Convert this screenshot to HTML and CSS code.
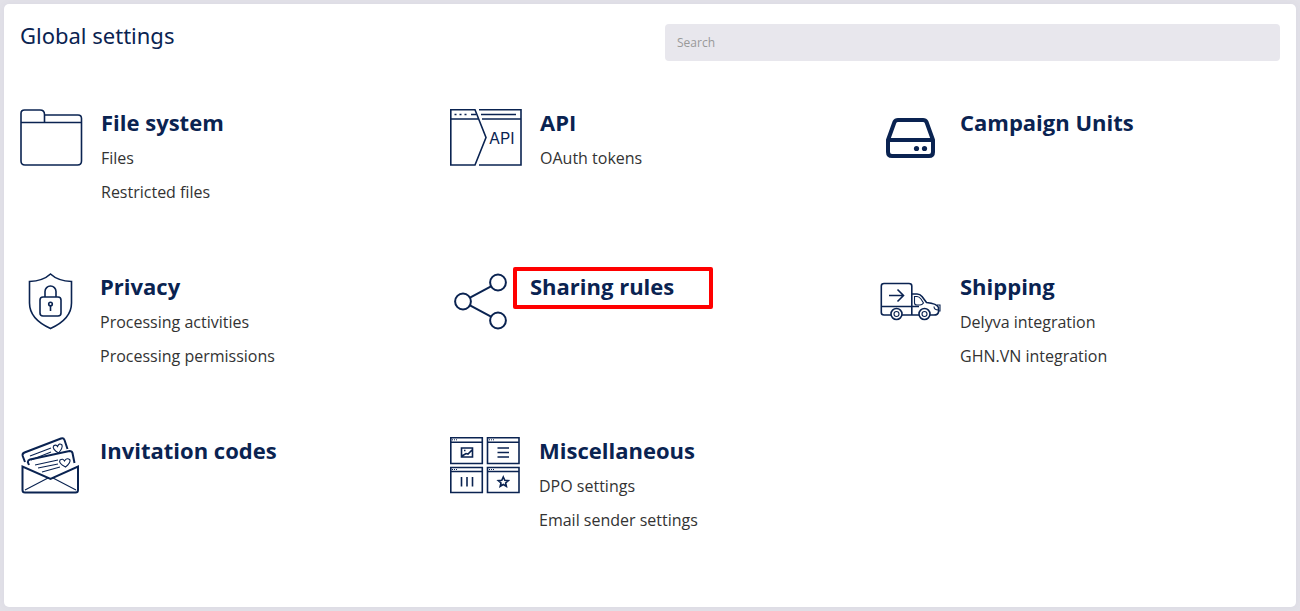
FILE: index.html
```html
<!DOCTYPE html>
<html lang="en">
<head>
<meta charset="utf-8">
<meta name="viewport" content="width=device-width, initial-scale=1">
<title>Global settings</title>
<link rel="stylesheet" href="styles.css">
</head>
<body>
<main class="card">
  <header class="card-header">
    <h1 class="title">Global settings</h1>
    <input class="search" type="search" placeholder="Search" aria-label="Search">
  </header>
  <div class="grid">
    <section class="item">
      <svg class="icon" width="61" height="60" viewBox="0 0 61 60" aria-hidden="true">
        <path d="M1 15V5.500Q1 2 4.500 2H20Q24.500 2 24.500 6.500V15M25 7H58Q61.500 7 61.500 10.500V53Q61.500 57 57.500 57H5Q1 57 1 53V14.500H61.500"/>
      </svg>
      <div class="body">
        <h2 class="heading">File system</h2>
        <ul class="links"><li><a href="#">Files</a></li><li><a href="#">Restricted files</a></li></ul>
      </div>
    </section>
    <section class="item">
      <svg class="icon" width="70" height="60" viewBox="0 0 70 60" aria-hidden="true">
        <path d="M.8 1.800H25L36 29.500L25 57H.8ZM29 1.800H71V57H29M.8 11H28M32 11H71M21 6.500H26M31 6.500H66"/>
        <path d="M4.500 6.500H6.500M9.500 6.500H11.500M14.500 6.500H16.500"/>
        <text class="icon-text" x="39" y="36">API</text>
      </svg>
      <div class="body">
        <h2 class="heading">API</h2>
        <ul class="links"><li><a href="#">OAuth tokens</a></li></ul>
      </div>
    </section>
    <section class="item">
      <svg class="icon" width="60" height="60" viewBox="0 0 60 60" aria-hidden="true">
        <path class="thick" d="M8 32L14.500 14Q15.500 12 18 12H43Q45.500 12 46.500 14L53 32V44Q53 48 49 48H12Q8 48 8 44ZM8 32H53"/>
        <circle class="solid" cx="36.500" cy="40.500" r="2.600"/><circle class="solid" cx="44.500" cy="40.500" r="2.600"/>
      </svg>
      <div class="body"><h2 class="heading">Campaign Units</h2></div>
    </section>
    <section class="item">
      <svg class="icon" width="60" height="60" viewBox="0 0 60 60" aria-hidden="true">
        <path d="M30.500 2Q38 9 51.500 9.500V31Q51.500 47 30.500 56.500Q9.500 47 9.500 31V9.500Q23 9 30.500 2Z"/>
        <rect x="20" y="25" width="21" height="19" rx="3"/>
        <path d="M25 25V19.500a5.500 5.500 0 0 1 11 0V25"/>
        <circle cx="30.500" cy="32" r="1.800"/><path d="M30.500 33.500V39"/>
      </svg>
      <div class="body">
        <h2 class="heading">Privacy</h2>
        <ul class="links"><li><a href="#">Processing activities</a></li><li><a href="#">Processing permissions</a></li></ul>
      </div>
    </section>
    <section class="item">
      <svg class="icon share" width="60" height="60" viewBox="0 0 60 60" aria-hidden="true">
        <circle cx="13" cy="29.500" r="7.900"/><circle cx="48" cy="10.500" r="7.900"/><circle cx="48" cy="48.500" r="7.900"/>
        <path d="M20 25.700L41 14.300M20 33.300L41 44.700"/>
      </svg>
      <div class="body"><h2 class="heading marked">Sharing rules</h2></div>
    </section>
    <section class="item">
      <svg class="icon" width="60" height="60" viewBox="0 0 60 60" aria-hidden="true">
        <path d="M11 43H4Q1.300 43 1.300 40.500V14Q1.300 11.500 4 11.500H29Q31.800 11.500 31.800 14V43H22M1.300 34.500H31.800M31.800 22H37Q40 22 42 24.500L46.500 30.500Q57 31.500 58.500 35.500V40Q58 43 54 43H50M39 43H31.800M31.800 34.500H39"/>
        <path class="fine" d="M34.500 24.500H37Q39 24.500 41 27L43.500 31Q42 33 40 33H37Q34.500 33 34.500 31ZM54 34.500Q54 38 58.500 38M57 33H60V39H58"/>
        <circle class="wheel" cx="16.500" cy="42" r="5.500"/><circle class="fine" cx="16.500" cy="42" r="2.500"/>
        <circle class="wheel" cx="44.500" cy="42" r="5.500"/><circle class="fine" cx="44.500" cy="42" r="2.500"/>
        <path d="M9 23.500H23M17.500 17.500L23.500 23.500L17.500 29.500"/>
      </svg>
      <div class="body">
        <h2 class="heading">Shipping</h2>
        <ul class="links"><li><a href="#">Delyva integration</a></li><li><a href="#">GHN.VN integration</a></li></ul>
      </div>
    </section>
    <section class="item">
      <svg class="icon" width="60" height="60" viewBox="0 0 60 60" aria-hidden="true">
        <path class="medium" d="M5 26L2.700 20Q2 17.500 4.500 16.500L41 2.500Q43.500 1.500 44.500 4L47.500 13M9 29L7.800 26Q8 24 10 23.500L49.500 15Q52 15 52.500 17L54.500 27M2.500 32V54Q2.500 56.500 5 56.500H55.500Q58 56.500 58 54V30.500L30.500 43L2.500 30.500Z"/>
        <path class="fine" d="M10 20L31 12M11 24L31 16M15 29L38 24M18 32L38 28M22 36L40 31M5 54L28 42M56 54L33 42M38.500 17Q32 13 33.500 10Q36 8 37.500 10.500Q39 6.500 42 9Q43 12 38.500 17ZM45.500 31Q38 27 40 24Q43 22 44.500 25Q47 21 50 24Q50.500 27 45.500 31Z"/>
      </svg>
      <div class="body"><h2 class="heading">Invitation codes</h2></div>
    </section>
    <section class="item">
      <svg class="icon" width="69" height="60" viewBox="0 0 69 60" aria-hidden="true">
        <path d="M.8 1.800H32.300V27.500H.8ZM37.500 1.800H69V27.500H37.500ZM.8 31.500H32.300V56.500H.8ZM37.500 31.500H69V56.500H37.500ZM.8 6.200H32.300M37.500 6.200H69M.8 35.500H32.300M37.500 35.500H69"/>
        <path class="dots" d="M2 3.800H8M39 3.800H45M2 33.500H8M39 33.500H45"/>
        <path d="M11.500 12H22.500V21H11.500ZM12 20L16 17.500L18 18L22 14M14 14.500H15.500M47.500 12H59M47.500 16.500H59M47.500 21H59M11.500 41V50.500M17 41V50.500M22.500 41V50.500M53.300 41L54.800 44.300L58.300 44.600L55.600 47L56.400 50.300L53.300 48.500L50.200 50.300L51 47L48.300 44.600L51.800 44.300Z"/>
      </svg>
      <div class="body">
        <h2 class="heading">Miscellaneous</h2>
        <ul class="links"><li><a href="#">DPO settings</a></li><li><a href="#">Email sender settings</a></li></ul>
      </div>
    </section>
  </div>
</main>
</body>
</html>
```
FILE: styles.css
```css
*, *::before, *::after { box-sizing: border-box; }
body {
  margin: 0;
  padding: 4px;
  background: #e2e1e8;
  font-family: "Open Sans", "Noto Sans", sans-serif;
  color: #333;
}
.card {
  min-height: calc(100vh - 8px);
  padding: 20px 16px;
  background: #fff;
  border-radius: 5px;
  box-shadow: 0 0 8px rgba(60, 50, 90, 0.04);
}
.card-header {
  display: grid;
  grid-template-columns: 1fr 1fr;
  gap: 30px;
  align-items: start;
  margin-bottom: 45px;
}
.title {
  margin: 0;
  font-family: "Noto Sans", "Open Sans", sans-serif;
  font-size: 22px;
  line-height: 22px;
  font-weight: 400;
  color: #0a2351;
}
.search {
  width: 100%;
  height: 37px;
  padding: 0 12px;
  border: 0;
  border-radius: 4px;
  background: #e8e7ed;
  font: 12px "Open Sans", "Noto Sans", sans-serif;
  color: #333;
}
.search::placeholder { color: #999; opacity: 1; }
.grid {
  display: grid;
  grid-template-columns: 43fr 43fr 40fr;
  row-gap: 61px;
}
.item {
  display: flex;
  align-items: flex-start;
  gap: 20px;
}
.icon {
  flex: none;
  margin-top: 2px;
  overflow: visible;
  fill: none;
  stroke: #0a2351;
  stroke-width: 1.6;
}
.icon .fine { stroke-width: 1.1; }
.icon .dots { stroke-width: 1; stroke-dasharray: 1 1; }
.icon .medium { stroke-width: 2; }
.icon .thick { stroke-width: 4; stroke-linejoin: round; }
.icon .solid { fill: #0a2351; stroke: none; }
.icon .wheel { fill: #fff; }
.share { stroke-width: 2; }
.icon-text {
  font: 16px Inter, sans-serif;
  fill: #0a2351;
  stroke: none;
}
.heading {
  margin: 0 0 3px;
  font-size: 22px;
  line-height: 32px;
  font-weight: 700;
  color: #0a2351;
}
.marked { position: relative; }
.marked::after {
  content: "";
  position: absolute;
  top: -3px;
  left: -17px;
  width: 200px;
  height: 42px;
  border: 4px solid #f00;
  border-radius: 2px;
}
.links {
  margin: 0;
  padding: 0;
  list-style: none;
  font-size: 16px;
  line-height: 34px;
}
.links a { color: inherit; text-decoration: none; }
```
